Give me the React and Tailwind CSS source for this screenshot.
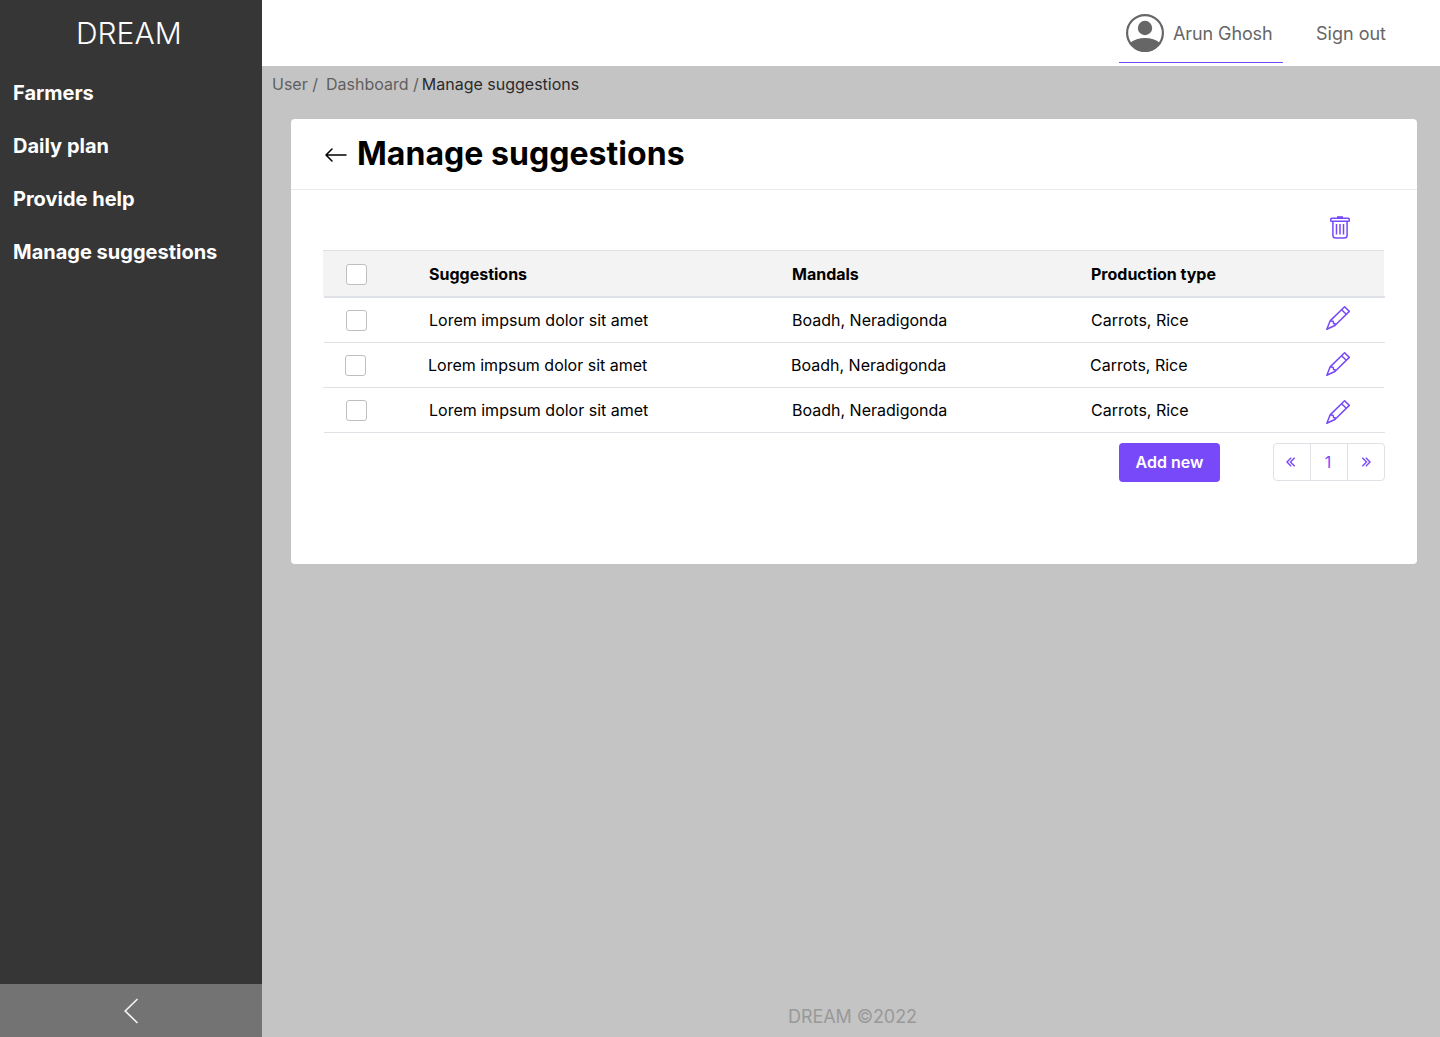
const navItems = ['Farmers', 'Daily plan', 'Provide help', 'Manage suggestions'];

const rows = [
  { id: 1, shift: '', pencil: 'mt-[-5px]' },
  { id: 2, shift: '-ml-px mr-px', pencil: 'mt-[-3px] translate-x-px' },
  { id: 3, shift: '', pencil: 'mt-[3px]' },
];

const columns = 'grid grid-cols-[106px_363px_299px_1fr] items-center';
const rowColumns = 'grid grid-cols-[105px_363px_299px_1fr] items-center';

function PencilIcon({ className }) {
  return (
    <svg width="24" height="24" viewBox="0 0 24 24" fill="none" stroke="#7749f8" strokeWidth="1.500" strokeLinejoin="round" className={className}>
      <path d="M18.600 .8 23.300 5.400 8.900 19.500.8 23.300 4.100 14.900z" />
      <path d="M15.600 3.700 20.300 8.300M4.100 14.900 7.100 15.200 7.600 17.500 9.200 17.700 8.900 19.500" />
    </svg>
  );
}

function TrashIcon() {
  return (
    <svg width="20" height="23" viewBox="0 0 20 23" fill="none" stroke="#7749f8" strokeWidth="1.500">
      <rect x=".75" y="2.200" width="18.500" height="3" rx=".8" />
      <path d="M7 1.200h6" strokeWidth="2" />
      <path d="M2.900 5.200V19.300a2.800 2.800 0 0 0 2.800 2.800h8.600a2.800 2.800 0 0 0 2.800-2.800V5.200M6.500 8v10.600M10 8v10.600M13.500 8v10.600" />
    </svg>
  );
}

function UserIcon() {
  return (
    <svg width="38" height="38" viewBox="0 0 38 38">
      <circle cx="19" cy="19" r="17.9" fill="none" stroke="#666" strokeWidth="2.2" />
      <circle cx="19" cy="14" r="7.2" fill="#666" />
      <path d="M4 29C8 25.500 13 24 19 24s11 1.500 15 5C31 34.500 25.500 38 19 38S7 34.500 4 29z" fill="#666" />
    </svg>
  );
}

function Checkbox({ className = '' }) {
  return <span className={`ml-[22px] block size-[21px] rounded-[3px] border border-[#bfbfbf] bg-white ${className}`} />;
}

function Chevrons({ flip }) {
  return (
    <svg width="10" height="10" viewBox="0 0 10 10" fill="none" stroke="#7749f8" strokeWidth="1.400" className={flip ? 'rotate-180' : ''}>
      <path d="M5.200 .8 1 5 5.200 9.200M8.700 .8 4.500 5 8.700 9.200" />
    </svg>
  );
}

function Sidebar() {
  return (
    <aside className="flex w-[262px] flex-col bg-[#363636] text-white">
      <div className="h-[67px] pl-[76px] text-[30px] leading-[67px] font-light">DREAM</div>
      <nav className="flex flex-col">
        {navItems.map((item) => (
          <a key={item} className="h-[53px] pl-[13px] text-[20px] leading-[53px] font-bold">{item}</a>
        ))}
      </nav>
      <button className="mt-auto flex h-[53px] items-center justify-center bg-[#737373]">
        <svg width="14" height="26" viewBox="0 0 14 26" fill="none" stroke="#f2f2f2" strokeWidth="1.700" strokeLinecap="round">
          <path d="M13 1.500 1.200 13 13 24.500" />
        </svg>
      </button>
    </aside>
  );
}

function Header() {
  return (
    <header className="flex h-[66px] justify-end bg-white pr-[54px] text-[18px] text-[#666]">
      <div className="mr-[33px] flex h-[63px] w-[164px] items-center border-b border-[#7749f8] pl-[7px]">
        <div className="flex items-center gap-[9px] pt-[4px]">
          <UserIcon />
          <span className="tracking-[-0.1px] whitespace-nowrap">Arun Ghosh</span>
        </div>
      </div>
      <a className="leading-[67px]">Sign out</a>
    </header>
  );
}

function SuggestionsTable() {
  return (
    <div className="mx-8 text-[16px] text-black">
      <div className={`${columns} mr-px h-[46px] border-t border-[#dee2e6] bg-[#f3f3f3] font-bold`}>
        <span className="pl-px"><Checkbox className="mt-px" /></span>
        <span>Suggestions</span>
        <span>Mandals</span>
        <span>Production type</span>
      </div>
      <div className="ml-px border-t-2 border-[#dee2e6]">
        {rows.map((row) => (
          <div key={row.id} className={`${rowColumns} h-[45px] border-b border-[#dee2e6] ${row.shift}`}>
            <Checkbox />
            <span>Lorem impsum dolor sit amet</span>
            <span>Boadh, Neradigonda</span>
            <span className="flex items-center justify-between pr-[35px]">
              Carrots, Rice
              <PencilIcon className={row.pencil} />
            </span>
          </div>
        ))}
      </div>
    </div>
  );
}

export default function App() {
  return (
    <div className="flex h-[1037px] w-[1440px] overflow-hidden bg-[#c4c4c4] font-['Inter',sans-serif]">
      <Sidebar />
      <div className="flex flex-1 flex-col">
        <Header />
        <div className="flex h-[53px] pl-[10px] text-[16px] leading-[37px] text-[#5f5f5f]">
          <span className="mr-[8px]">User /</span>
          <span className="mr-[3px]">Dashboard /</span>
          <span className="text-[#2b2b2b]">Manage suggestions</span>
        </div>
        <main className="mr-[23px] ml-[29px] h-[445px] rounded bg-white">
          <div className="flex h-[71px] items-center border-b border-[#e9e9e9] pl-[34px]">
            <svg width="22" height="14" viewBox="0 0 22 14" fill="none" stroke="#000" strokeWidth="1.500" strokeLinecap="round" strokeLinejoin="round" className="mt-px">
              <path d="M7 1 1 7l6 6M1 7h20" />
            </svg>
            <h1 className="ml-[10px] text-[32px] leading-[70px] font-bold tracking-[0.04px]">Manage suggestions</h1>
          </div>
          <div className="flex h-[60px] justify-end pt-[26px] pr-[67px]">
            <TrashIcon />
          </div>
          <SuggestionsTable />
          <div className="mr-8 flex justify-end pt-[10px]">
            <button className="h-[39px] w-[101px] rounded bg-[#7749f8] pb-px text-[16px] font-semibold text-white">Add new</button>
            <div className="ml-[53px] flex h-[38px] w-[112px] divide-x divide-[#dee2e6] rounded border border-[#dee2e6] text-[16px] text-[#7749f8]">
              <span className="flex w-[37px] items-center justify-center pr-[2px]"><Chevrons /></span>
              <span className="flex w-[37px] items-center justify-center pr-[2px]">1</span>
              <span className="flex flex-1 items-center justify-center"><Chevrons flip /></span>
            </div>
          </div>
        </main>
        <footer className="mt-auto h-[41px] pl-[3px] text-center text-[18px] leading-[42px] tracking-[-0.1px] text-[#999]">DREAM ©2022</footer>
      </div>
    </div>
  );
}
